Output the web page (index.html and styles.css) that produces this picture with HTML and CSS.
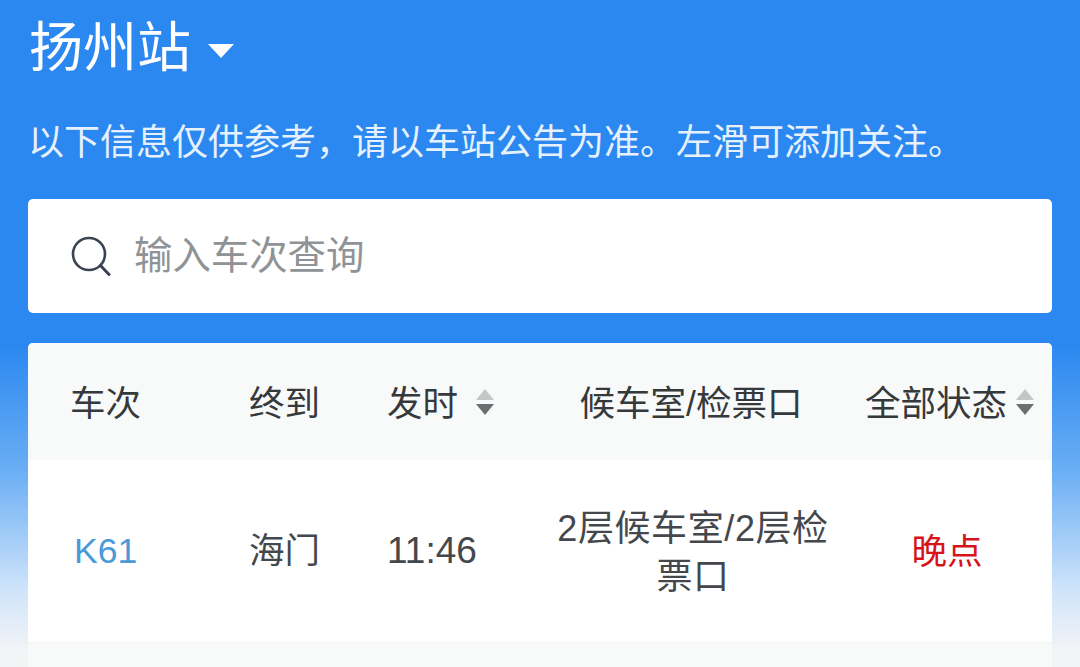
FILE: index.html
```html
<!DOCTYPE html>
<html lang="zh-CN">
<head>
    <meta charset="UTF-8">
    <meta name="viewport" content="width=device-width, initial-scale=1.0">
    <title>扬州站</title>
    <link rel="stylesheet" href="styles.css">
</head>
<body>
    <div class="container">
        <header class="station">
            <h1>扬州站</h1>
            <span class="caret"></span>
        </header>

        <p class="notice">以下信息仅供参考，请以车站公告为准。左滑可添加关注。</p>

        <div class="search">
            <svg class="search-icon" viewBox="0 0 40 40" width="40" height="40">
                <circle cx="18" cy="18" r="16" fill="none" stroke="#3a4350" stroke-width="2.6"/>
                <path d="M29.5 29.5 L38 38.5" fill="none" stroke="#3a4350" stroke-width="3" stroke-linecap="round"/>
            </svg>
            <span class="placeholder">输入车次查询</span>
        </div>

        <div class="table">
            <div class="row head">
                <div class="col-train">车次</div>
                <div>终到</div>
                <div class="sortable">发时
                    <svg class="sort" viewBox="0 0 18 26" width="18" height="26">
                        <path d="M9 0 L18 11 L0 11 Z" fill="#c4c6c8"/>
                        <path d="M0 15 L18 15 L9 26 Z" fill="#6c6f72"/>
                    </svg>
                </div>
                <div class="col-gate">候车室/检票口</div>
                <div class="sortable col-status">全部状态
                    <svg class="sort" viewBox="0 0 18 26" width="18" height="26">
                        <path d="M9 0 L18 11 L0 11 Z" fill="#c4c6c8"/>
                        <path d="M0 15 L18 15 L9 26 Z" fill="#6c6f72"/>
                    </svg>
                </div>
            </div>
            <div class="row item">
                <div class="col-train train-no">K61</div>
                <div>海门</div>
                <div class="time">11:46</div>
                <div class="col-gate gate-text">2层候车室/2层检票口</div>
                <div class="late">晚点</div>
            </div>
            <div class="row next"></div>
        </div>
    </div>
</body>
</html>
```

FILE: styles.css
```css
html, body {
    height: 100%;
}

body {
    margin: 0;
    overflow: hidden;
    font-family: "Liberation Sans", "Noto Sans CJK SC", sans-serif;
    background: linear-gradient(180deg, #2b88f0 0, #2b88f0 345px, #6aaef4 470px, #cfe4fa 590px, #f2f4f6 650px);
}

.container {
    padding: 0 28px;
}

.station {
    display: flex;
    align-items: center;
    height: 92px;
    padding: 4px 0 0 1px;
    box-sizing: border-box;
    color: white;
}

h1 {
    margin: 0;
    font-size: 54px;
    font-weight: 400;
    line-height: 88px;
}

.caret {
    width: 0;
    height: 0;
    margin: 6px 0 0 17px;
    border-left: 13px solid transparent;
    border-right: 13px solid transparent;
    border-top: 14px solid white;
}

.notice {
    margin: 0;
    padding: 24px 0 0;
    height: 83px;
    box-sizing: border-box;
    font-size: 36px;
    line-height: 54px;
    color: #e6f1fd;
    white-space: nowrap;
}

.search {
    display: flex;
    align-items: center;
    height: 114px;
    margin-top: 24px;
    padding-left: 43px;
    background-color: white;
    border-radius: 5px;
}

.search-icon {
    flex: none;
}

.placeholder {
    margin: 0 0 8px 23px;
    font-size: 38.4px;
    color: #8f9396;
}

.table {
    margin-top: 30px;
    background-color: white;
    border-radius: 5px 5px 0 0;
    overflow: hidden;
    font-size: 35.5px;
    color: #44484c;
}

.row {
    display: grid;
    grid-template-columns: 221px 138px 159px 290px 216px;
    align-items: center;
}

.head {
    height: 117px;
    padding-bottom: 2px;
    box-sizing: border-box;
    background-color: #f8f9f9;
    color: #36393c;
}

.item {
    height: 183px;
    border-bottom: 1px solid #f2f3f4;
    box-sizing: border-box;
    line-height: 48px;
}

.next {
    height: 30px;
    background-color: #f8f9f9;
}

.col-train {
    padding-left: 42px;
}

.col-gate {
    text-align: center;
}

.gate-text {
    padding: 4px 0 0 4px;
    font-size: 36px;
    letter-spacing: 0.6px;
}

.col-status {
    padding-left: 29px;
    white-space: nowrap;
}

.sortable {
    display: flex;
    align-items: center;
}

.sort {
    margin-left: 18px;
    margin-top: 2px;
    flex: none;
}

.col-status .sort {
    margin-left: 9px;
}

.train-no {
    padding-left: 46px;
    color: #4a9ad8;
}

.time {
    font-size: 37px;
}

.late {
    padding: 2px 0 0 6px;
    text-align: center;
    color: #d6121a;
}
```
